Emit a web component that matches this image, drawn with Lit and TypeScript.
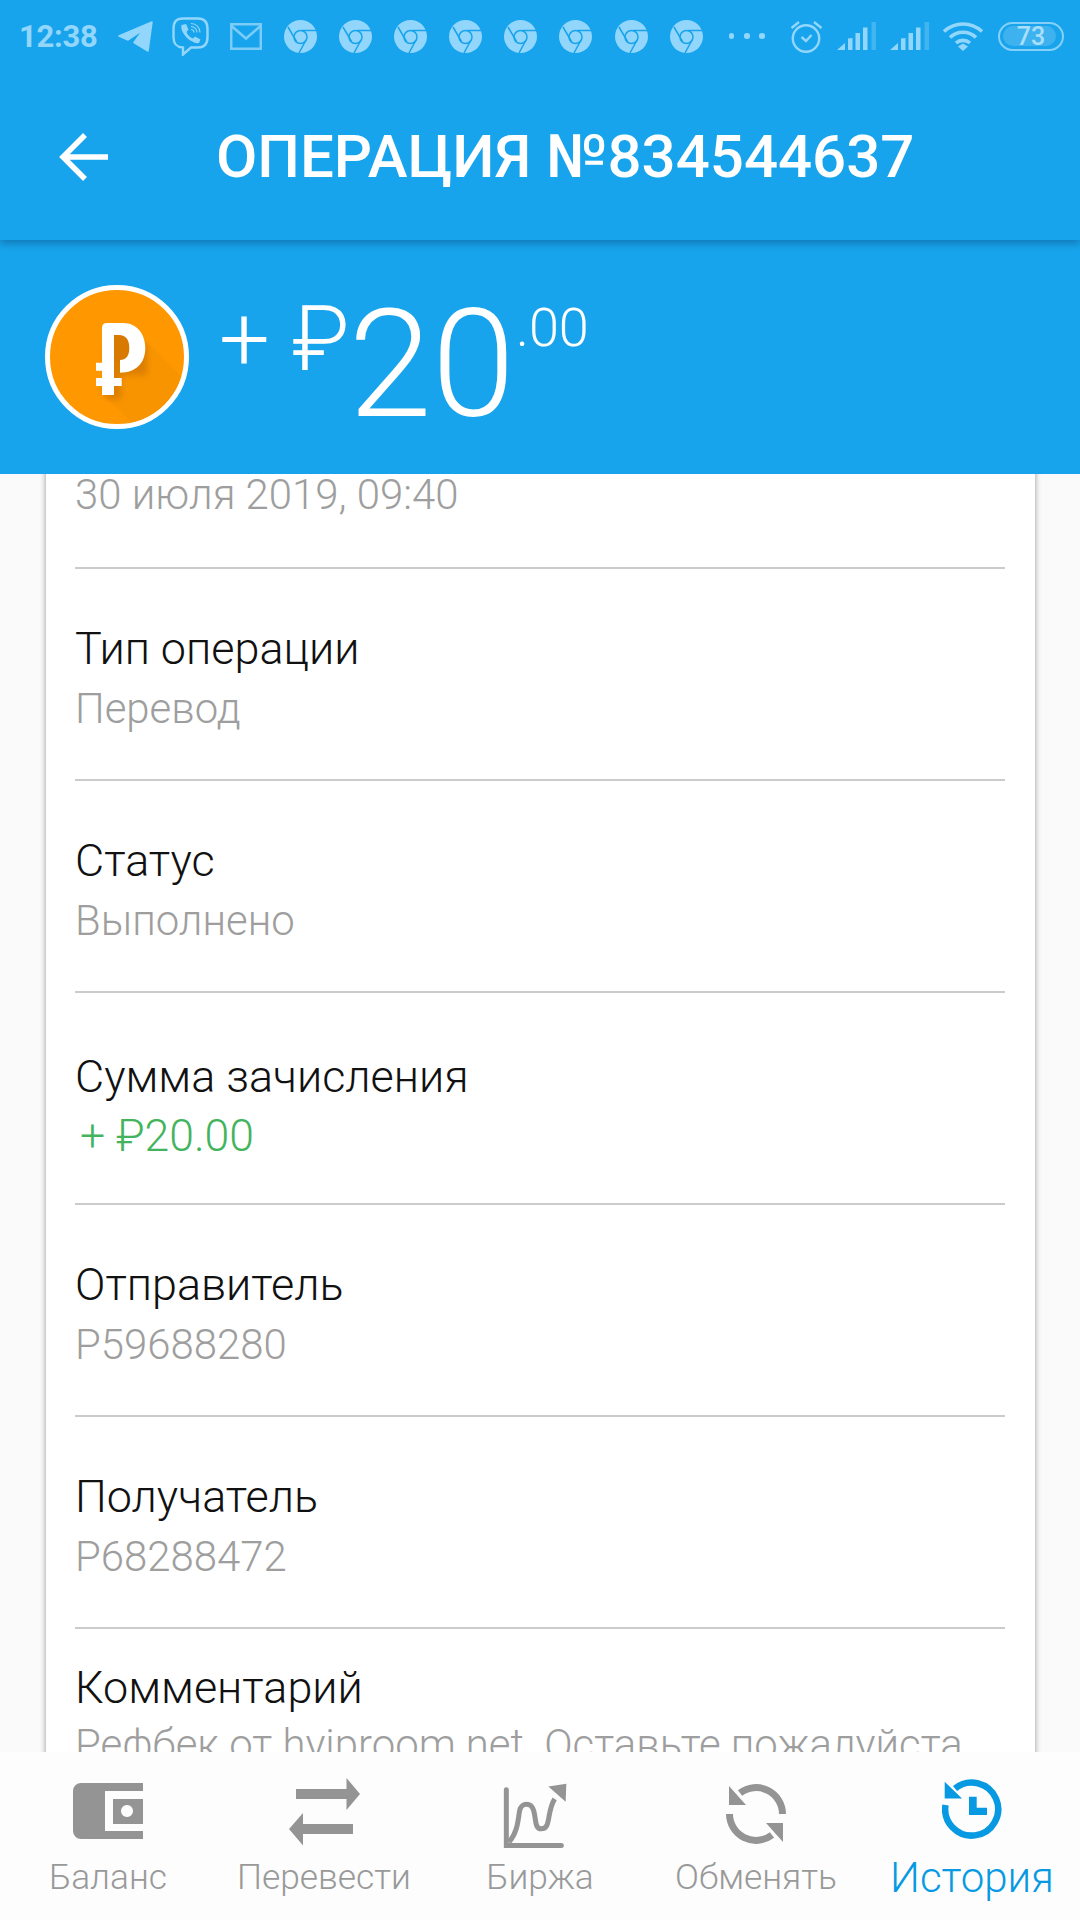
import { LitElement, html, css, svg } from "lit";
import { customElement } from "lit/decorators.js";

const rows = [
  { label: "Тип операции", value: "Перевод" },
  { label: "Статус", value: "Выполнено" },
  { label: "Сумма зачисления", value: "+ ₽20.00", green: true },
  { label: "Отправитель", value: "P59688280" },
  { label: "Получатель", value: "P68288472" },
];

const chrome = svg`<circle cx="16.5" cy="16.5" r="16.5" fill="currentColor"/>
<circle cx="16.5" cy="17" r="6.5" fill="none" stroke="#18a4ec" stroke-width="1.5"/>
<path d="M4 7L12.5 21.5M18 10.5H32.5M22 20L15 33" fill="none" stroke="#18a4ec" stroke-width="1.5"/>`;

const sig = svg`<path fill="currentColor" d="M0 28L8 21V28ZM11 16.5L15.5 16V28H11ZM18.5 11H23V28H18.5ZM26 5.5H30.5V28H26Z"/><path fill="currentColor" opacity=".35" d="M34.5 0H39V28H34.5Z"/>`;

const nav = [
  { label: "Баланс", w: 70, h: 62, vb: "0 0 70 62", icon: svg`<path d="M8 0H70V8H32V48H70V56H8A8 8 0 0 1 0 48V8A8 8 0 0 1 8 0Z"/><path fill-rule="evenodd" d="M40 16H70V41H40ZM54 22a6 6 0 1 0 .01 0Z"/>` },
  { label: "Перевести", w: 71, h: 72, vb: "0 0 71 72", icon: svg`<path d="M7 11H57.5V0L71 16L57.5 32V21H7ZM14 46H64V56H14V67.5L0 51L14 35Z"/>` },
  { label: "Биржа", w: 74, h: 70, vb: "40 26 222 209", icon: svg`<path d="M50 58V225H215" fill="none" stroke="currentColor" stroke-width="15" stroke-linecap="round"/><path d="M58 215C85 185 85 145 90 120C95 95 125 95 132 120C140 150 135 175 155 175C185 175 170 125 195 85" fill="none" stroke="currentColor" stroke-width="15"/><path d="M176 48L230 40L228 94Z"/>` },
  { label: "Обменять", w: 60, h: 60, vb: "0 0 60 60", icon: svg`<path d="M56.5 30A26.5 26.5 0 0 0 14 9M3.5 30A26.5 26.5 0 0 0 46 51" fill="none" stroke="currentColor" stroke-width="7"/><path d="M3 2V21H20ZM57 58V39H40Z"/>` },
  { label: "История", w: 60, h: 70, vb: "0 0 60 70", active: true, icon: svg`<path d="M3.5 26A26.5 26.5 0 1 0 13 9.5" fill="none" stroke="currentColor" stroke-width="6.5"/><path d="M2.7 2.7V19.5H20ZM27 17.7H34.7V28.7H45V36H27Z"/>` },
];

@customElement("app-root")
export class AppRoot extends LitElement {
  static styles = css`
    :host { display: block; width: 1080px; height: 1920px; font-family: Roboto, "Noto Sans", sans-serif; }
    .page { width: 1080px; height: 1920px; display: flex; flex-direction: column; background: #fafafa; overflow: hidden; }
    .top { background: #18a4ec; color: #fff; flex: none; }
    .head { height: 240px; display: flex; flex-direction: column; position: relative; z-index: 1; box-shadow: 0 4px 7px rgba(0,40,80,.32); background: #18a4ec; }
    .status { height: 72px; display: flex; align-items: center; color: #93d6fb; flex: none; }
    .time { margin-left: 19px; font-size: 31px; font-weight: 700; width: 99px; flex: none; letter-spacing: -0.3px; line-height: 1; }
    .status svg { display: block; flex: none; }
    .tele { width: 35px; height: 31px; margin-right: 19px; }
    .viber { width: 37px; height: 39px; margin-right: 21px; }
    .mail { width: 32px; height: 27px; margin-right: 22px; }
    .chrome { width: 33px; height: 33px; margin-right: 22.1px; }
    .dots { display: flex; gap: 9.75px; margin: 0 25px 0 4px; flex: none; }
    .dots i { width: 5.5px; height: 5.5px; border-radius: 50%; background: currentColor; }
    .alarm { width: 33px; height: 33px; margin-right: 14px; }
    .sig { width: 39px; height: 28px; margin-right: 14px; }
    .sig.two { margin-right: 14.6px; }
    .wifi { width: 40px; height: 29px; margin-right: 14.6px; }
    .batt { width: 66px; height: 29px; flex: none; border: 2.5px solid #84d0f8; border-radius: 15px; box-sizing: border-box; position: relative; display: flex; align-items: center; justify-content: center; font-size: 25px; font-weight: 500; line-height: 1; color: #a8dffc; }
    .batt::before { content: ""; position: absolute; left: 3px; top: 2.5px; bottom: 2.5px; width: 53px; border-radius: 10px; background: rgba(255,255,255,.16); }
    .batt span { position: relative; }
    .bar { flex: 1; display: flex; align-items: center; padding-top: 2px; }
    .back { width: 50px; height: 48px; margin-left: 59px; flex: none; }
    .title { margin-left: 107px; font-size: 60px; font-weight: 500; white-space: nowrap; line-height: 1; }
    .band { height: 234px; display: flex; align-items: flex-start; }
    .coin { width: 144px; height: 144px; margin: 45px 0 0 45px; flex: none; display: block; }
    .plus { font-weight: 300; font-size: 90px; line-height: 1; margin: 55px 0 0 30px; white-space: nowrap; }
    .big { font-weight: 300; font-size: 150px; line-height: 1; margin: 50px 0 0 -1px; }
    .sm { font-weight: 300; font-size: 54px; line-height: 1; margin: 61px 0 0 1px; }
    .main { flex: 1; min-height: 0; overflow: hidden; }
    .card { margin: -42px 45px 0 46px; background: #fff; box-shadow: 0 0 6px rgba(0,0,0,.4); padding: 0 30px 0 29px; }
    .row { height: 212px; box-sizing: border-box; border-bottom: 2px solid #cbcbcb; padding-top: 50px; line-height: 1; }
    .row.first { height: 137px; padding-top: 33px; }
    .row.tall { padding-top: 54px; }
    .row.last { border: 0; padding-top: 29px; height: 300px; }
    .l { color: #111; font-weight: 300; font-size: 44.9px; height: 60px; display: flex; align-items: center; white-space: nowrap; }
    .v { color: #9e9e9e; font-weight: 300; font-size: 41.9px; height: 59px; display: flex; align-items: center; white-space: nowrap; }
    .v.green { color: #43b45d; padding-left: 5px; font-size: 44.5px; }
    .last .v { height: 53px; }
    nav { height: 168px; flex: none; background: #fdfdfd; display: grid; grid-template-columns: repeat(5, 216px); position: relative; z-index: 1; }
    .item { color: #949494; display: flex; flex-direction: column; align-items: center; }
    .item.on { color: #079ae2; }
    .slot { height: 84px; margin-top: 20px; display: flex; align-items: center; justify-content: center; }
    .item svg { fill: currentColor; display: block; }
    .lab { font-size: 35.3px; font-weight: 300; color: #999; line-height: 1; white-space: nowrap; margin-top: 4px; }
    .item.on .lab { font-size: 42px; color: #079ae2; margin-top: 1px; }
  `;

  render() {
    return html`<div class="page">
      <div class="top">
        <div class="head">
          <div class="status">
            <span class="time">12:38</span>
            <svg class="tele" viewBox="0 0 35 31"><path fill="currentColor" stroke="currentColor" stroke-width="1.5" stroke-linejoin="round" d="M1 15L34 1L30 30L16 21.5L25 9L10 19Z"/></svg>
            <svg class="viber" viewBox="0 0 37 39"><path fill="none" stroke="currentColor" stroke-width="2.4" d="M11 1.5H26C32 1.5 35.5 5 35.5 12V20C35.5 27 32 30.5 26 30.5H19L11 37.5V30.5C4 30 1.5 27 1.5 20V12C1.5 5 4 1.5 11 1.5Z"/><path fill="currentColor" d="M9.5 8L14 7L16.5 12.5L14.5 15C15.5 18 18 20.5 21 21.5L23 19.5L28.5 22.5L27 26C20 27.5 7.5 16 9.5 8Z"/><path fill="none" stroke="currentColor" stroke-width="1.1" d="M19 6.5C24 6.5 28 10.5 28 15.5M19 9.5C22 9.5 25 12 25 15.5M19 12.5C21 12.5 22 13.5 22 15.5"/></svg>
            <svg class="mail" viewBox="0 0 32 27" opacity=".55"><path fill="none" stroke="#cdeeff" stroke-width="2.5" d="M1.2 1.2H30.8V25.8H1.2ZM1.5 3L16 15.5L30.5 3"/></svg>
            ${Array.from({ length: 8 }, () => html`<svg class="chrome" viewBox="0 0 33 33">${chrome}</svg>`)}
            <div class="dots"><i></i><i></i><i></i></div>
            <svg class="alarm" viewBox="0 0 33 33"><g fill="none" stroke="currentColor" stroke-width="2.4"><circle cx="16" cy="18.5" r="13.2"/><path d="M11.5 17L16 21L21.5 15M1.5 8L9 2M31.5 8L24 2"/></g></svg>
            <svg class="sig" viewBox="0 0 39 28">${sig}</svg>
            <svg class="sig two" viewBox="0 0 39 28">${sig}</svg>
            <svg class="wifi" viewBox="0 0 40 29"><g fill="none" stroke="currentColor" stroke-width="3.6"><path d="M1 9.5C12 -0.5 28 -0.5 39 9.5M7 15.5C14 8.5 26 8.5 33 15.5M13 21C17 17.5 23 17.5 27 21"/></g><path fill="currentColor" d="M15 24.5L20 21.5L25 24.5L20 29Z"/></svg>
            <div class="batt"><span>73</span></div>
          </div>
          <div class="bar">
            <svg class="back" viewBox="0 0 50 48"><path fill="none" stroke="#fff" stroke-width="5.5" d="M49 24H5M26 2L4 24L26 46"/></svg>
            <div class="title">ОПЕРАЦИЯ №834544637</div>
          </div>
        </div>
        <div class="band">
          <svg class="coin" viewBox="0 0 144 144">
            <defs>
              <filter id="soft" x="-30%" y="-30%" width="160%" height="160%"><feGaussianBlur stdDeviation="3"/></filter>
              <clipPath id="disc"><circle cx="72" cy="72" r="67"/></clipPath>
              <clipPath id="hole"><path d="M69 50H84.3V77H69Z"/></clipPath>
            </defs>
            <circle cx="72" cy="72" r="69.5" fill="#ff9800" stroke="#fff" stroke-width="5"/>
            <g clip-path="url(#disc)">
              <path fill="#f89400" d="M85 40L150 105V150H100L52 104Z"/>
            </g>
            <path fill="#b86400" opacity=".45" filter="url(#soft)" d="M59 60H102V90H76V114H60Z"/>
            <path fill="#d97a00" clip-path="url(#hole)" d="M69 50H84.3V77H69Z"/>
            <path fill="#fff" d="M57 43Q57 38 62 38H78C92 38 100.3 49 100.3 63C100.3 78 91 87.7 75 87.7V75C81 75 84.3 71 84.3 63C84.3 55 81 50 74 50H69V77.7V85.7V93H76.7V101H69V110H57V101H51V93H57V85.7H51V77.7H57Z"/>
          </svg>
          <div class="plus">+ ₽</div>
          <div class="big">20</div>
          <div class="sm">.00</div>
        </div>
      </div>
      <div class="main">
        <div class="card">
          <div class="row first"><div class="v">30 июля 2019, 09:40</div></div>
          ${rows.map(
            (r) => html`<div class="row ${r.green ? "tall" : ""}"><div class="l">${r.label}</div><div class="v ${r.green ? "green" : ""}">${r.value}</div></div>`
          )}
          <div class="row last"><div class="l">Комментарий</div><div class="v">Рефбек от hyiproom.net. Оставьте пожалуйста</div></div>
        </div>
      </div>
      <nav>
        ${nav.map(
          (n) => html`<div class="item ${n.active ? "on" : ""}">
            <div class="slot"><svg width=${n.w} height=${n.h} viewBox=${n.vb}>${n.icon}</svg></div>
            <div class="lab">${n.label}</div>
          </div>`
        )}
      </nav>
    </div>`;
  }
}
